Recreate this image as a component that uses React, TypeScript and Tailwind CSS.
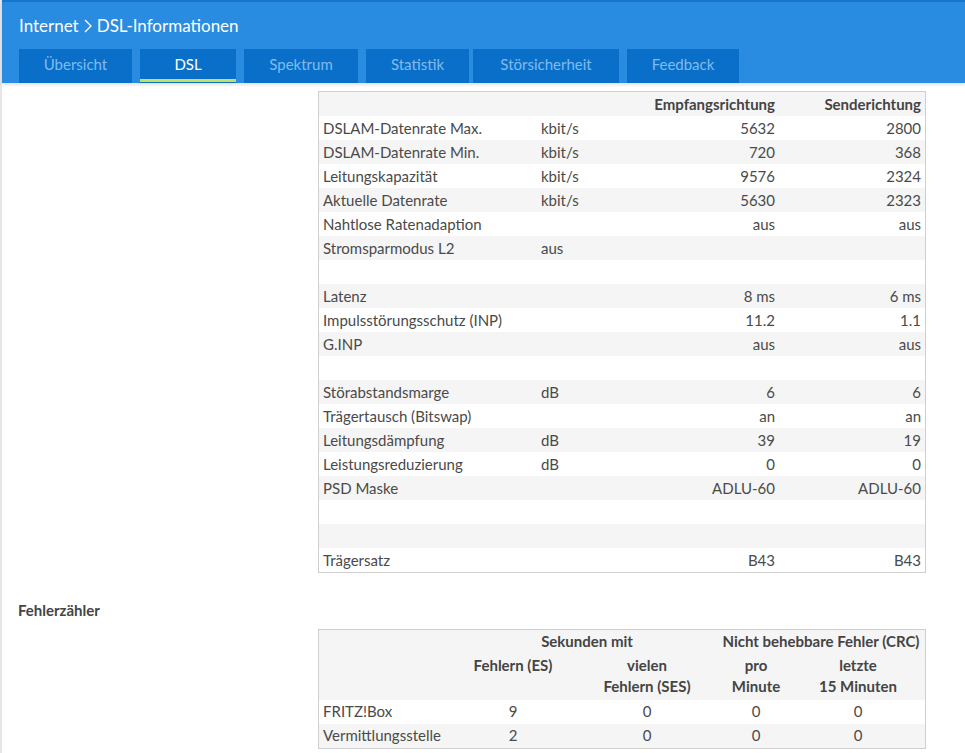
import React from "react";

const tabs = ["Übersicht", "DSL", "Spektrum", "Statistik", "Störsicherheit", "Feedback"];
const tabWidths = ["w-[113px]", "w-[96px]", "w-[114px]", "w-[103px]", "w-[146px]", "w-[112px]"];

// [label, unit, empfang, sende]
const rows: [string, string, string, string][] = [
  ["DSLAM-Datenrate Max.", "kbit/s", "5632", "2800"],
  ["DSLAM-Datenrate Min.", "kbit/s", "720", "368"],
  ["Leitungskapazität", "kbit/s", "9576", "2324"],
  ["Aktuelle Datenrate", "kbit/s", "5630", "2323"],
  ["Nahtlose Ratenadaption", "", "aus", "aus"],
  ["Stromsparmodus L2", "aus", "", ""],
  ["", "", "", ""],
  ["Latenz", "", "8 ms", "6 ms"],
  ["Impulsstörungsschutz (INP)", "", "11.2", "1.1"],
  ["G.INP", "", "aus", "aus"],
  ["", "", "", ""],
  ["Störabstandsmarge", "dB", "6", "6"],
  ["Trägertausch (Bitswap)", "", "an", "an"],
  ["Leitungsdämpfung", "dB", "39", "19"],
  ["Leistungsreduzierung", "dB", "0", "0"],
  ["PSD Maske", "", "ADLU-60", "ADLU-60"],
  ["", "", "", ""],
  ["", "", "", ""],
  ["Trägersatz", "", "B43", "B43"],
];

const errors: [string, string, string, string, string][] = [
  ["FRITZ!Box", "9", "0", "0", "0"],
  ["Vermittlungsstelle", "2", "0", "0", "0"],
];

export default function App() {
  return (
    <div
      className="min-h-[753px] bg-white text-[#4a4a4a] text-[15px] border-l-2 border-[#e6e6e6]"
      style={{ fontFamily: "Lato, 'Noto Sans', sans-serif" }}
    >
      {/* Kopfbereich */}
      <header className="bg-[#2a8ce0] border-t-2 border-[#1a76cc] shadow-[0_2px_3px_rgba(0,0,0,0.12)]">
        <div className="flex items-center h-[47px] pl-[17px] text-white text-[17px]">
          <span>Internet</span>
          <svg width="14" height="18" viewBox="0 0 14 18" className="mx-[2px]">
            <path d="M4 3 L10 9 L4 15" fill="none" stroke="white" strokeWidth="1.3" />
          </svg>
          <span>DSL-Informationen</span>
        </div>
        <nav className="flex gap-2 pl-[17px]">
          {tabs.map((t, i) => (
            <div
              key={t}
              className={`${tabWidths[i]} h-[34px] pb-[3px] bg-[#0a6fc8] flex items-center justify-center relative ${
                t === "DSL" ? "text-white" : "text-[#7fbcef]"
              } ${i === 4 ? "-ml-1" : ""}`}
            >
              {t}
              {t === "DSL" && (
                <span className="absolute left-0 right-0 bottom-[1px] h-[3px] bg-[#c5e15c]" />
              )}
            </div>
          ))}
        </nav>
      </header>

      <main className="pt-[8px]">
        <div className="ml-[316px] w-[608px] border border-[#cfcfcf]">
          <div className="grid grid-cols-[222px_1fr_152px_150px] h-6 items-center bg-[#f5f5f5] font-bold text-[#444]">
            <span />
            <span />
            <span className="text-right">Empfangsrichtung</span>
            <span className="text-right pr-1">Senderichtung</span>
          </div>
          {rows.map((r, i) => (
            <div
              key={i}
              className={`grid grid-cols-[222px_1fr_152px_150px] h-6 items-center ${
                i % 2 === 0 ? "bg-white" : "bg-[#f5f5f5]"
              }`}
            >
              <span className="pl-1 whitespace-nowrap">{r[0]}</span>
              <span>{r[1]}</span>
              <span className="text-right">{r[2]}</span>
              <span className="text-right pr-1">{r[3]}</span>
            </div>
          ))}
        </div>

        <h2 className="font-bold text-[#444] pl-4 mt-[26px]">Fehlerzähler</h2>

        <div className="ml-[316px] mt-[7px] w-[608px] border border-[#cfcfcf] text-center">
          <div className="bg-[#f5f5f5] font-bold text-[#444] pb-[3px]">
            <div className="grid grid-cols-[134px_268px_1fr] h-[22px] items-center">
              <span />
              <span>Sekunden mit</span>
              <span className="pr-1">Nicht behebbare Fehler (CRC)</span>
            </div>
            <div className="grid grid-cols-[134px_120px_148px_70px_1fr] leading-[21px] mt-[3px]">
              <span />
              <span>Fehlern (ES)</span>
              <span>
                vielen
                <br />
                Fehlern (SES)
              </span>
              <span>
                pro
                <br />
                Minute
              </span>
              <span>
                letzte
                <br />
                15 Minuten
              </span>
            </div>
          </div>
          {errors.map((r, i) => (
            <div
              key={r[0]}
              className={`grid grid-cols-[134px_120px_148px_70px_1fr] h-6 items-center ${
                i % 2 === 0 ? "bg-white" : "bg-[#f5f5f5]"
              }`}
            >
              <span className="text-left pl-1">{r[0]}</span>
              <span>{r[1]}</span>
              <span>{r[2]}</span>
              <span>{r[3]}</span>
              <span>{r[4]}</span>
            </div>
          ))}
        </div>
      </main>
    </div>
  );
}
